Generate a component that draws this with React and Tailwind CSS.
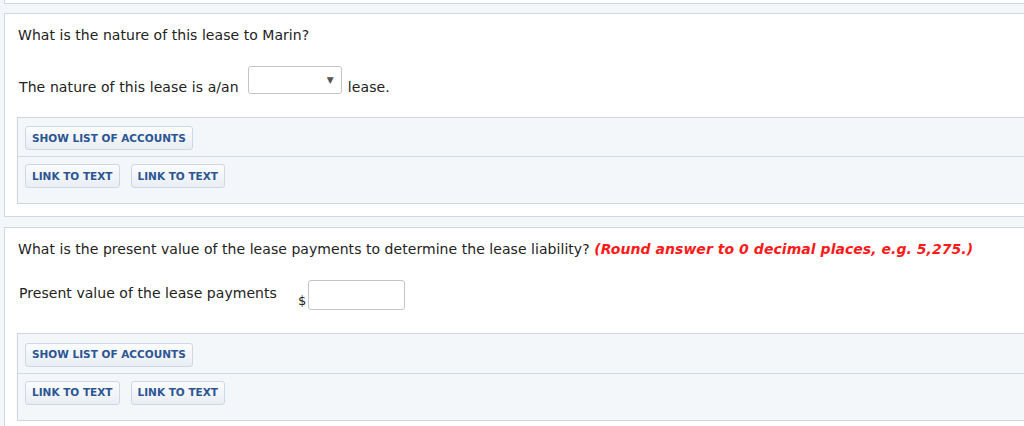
const font = { fontFamily: '"DejaVu Sans", Verdana, sans-serif' }

const Btn = ({ children }) => (
  <button className="h-[24px] px-[6px] rounded-[3px] border border-[#cfd7e2] bg-gradient-to-b from-[#fbfcfd] to-[#e9eef4] text-[10.5px] font-bold text-[#2b5593] leading-none">
    {children}
  </button>
)

const ResourcePanel = () => (
  <div className="border border-[#cdd5e0] bg-[#f4f7fa]">
    <div className="px-[7px] pt-[7px] pb-[6px] border-b border-[#d3dae4]">
      <Btn>SHOW LIST OF ACCOUNTS</Btn>
    </div>
    <div className="flex gap-[11px] px-[7px] pt-[7px] pb-[15px]">
      <Btn>LINK TO TEXT</Btn>
      <Btn>LINK TO TEXT</Btn>
    </div>
  </div>
)

export default function App() {
  return (
    <div className="w-[1024px] h-[426px] overflow-hidden bg-[#f4f7fa] text-[#222]" style={font}>
      <div className="ml-[4px] h-[4px] w-[1040px] bg-white border-l border-b border-[#d0d8e3]" />

      <div className="ml-[4px] mt-[9px] w-[1040px] bg-white border border-[#d0d8e3] px-[12px] pt-[11px] pb-[12px]">
        <div className="h-[20px] leading-[20px] text-[14px] pl-[1px] tracking-[0.05px]">What is the nature of this lease to Marin?</div>
        <div className="mt-[21px] flex items-start text-[14px] leading-[20px] pl-[2px] tracking-[0.1px]">
          <span className="mt-[11px]">The nature of this lease is a/an</span>
          <div className="ml-[9px] w-[94px] h-[28px] border border-[#c4c4c4] rounded-[3px] bg-white flex items-center justify-end pr-[7px]">
            <span className="text-[9px] text-[#555] leading-none">▼</span>
          </div>
          <span className="ml-[6px] mt-[11px]">lease.</span>
        </div>
        <div className="mt-[20px]">
          <ResourcePanel />
        </div>
      </div>

      <div className="ml-[4px] mt-[10px] w-[1040px] bg-white border border-[#d0d8e3] px-[12px] pt-[11px] pb-[11px]">
        <div className="h-[20px] leading-[20px] text-[14px] pl-[1px] tracking-[0.05px]">
          What is the present value of the lease payments to determine the lease liability?{' '}
          <span className="text-[#ff1a1a] font-bold italic">(Round answer to 0 decimal places, e.g. 5,275.)</span>
        </div>
        <div className="mt-[21px] flex items-start text-[14px] leading-[20px] pl-[2px] tracking-[0.05px]">
          <span className="mt-[3px]">Present value of the lease payments</span>
          <span className="ml-[21px] mt-[13px] text-[13px] leading-[16px]">$</span>
          <div className="ml-[2px] w-[97px] h-[30px] border border-[#c4c4c4] rounded-[3px] bg-white" />
        </div>
        <div className="mt-[23px]">
          <ResourcePanel />
        </div>
      </div>
    </div>
  )
}
